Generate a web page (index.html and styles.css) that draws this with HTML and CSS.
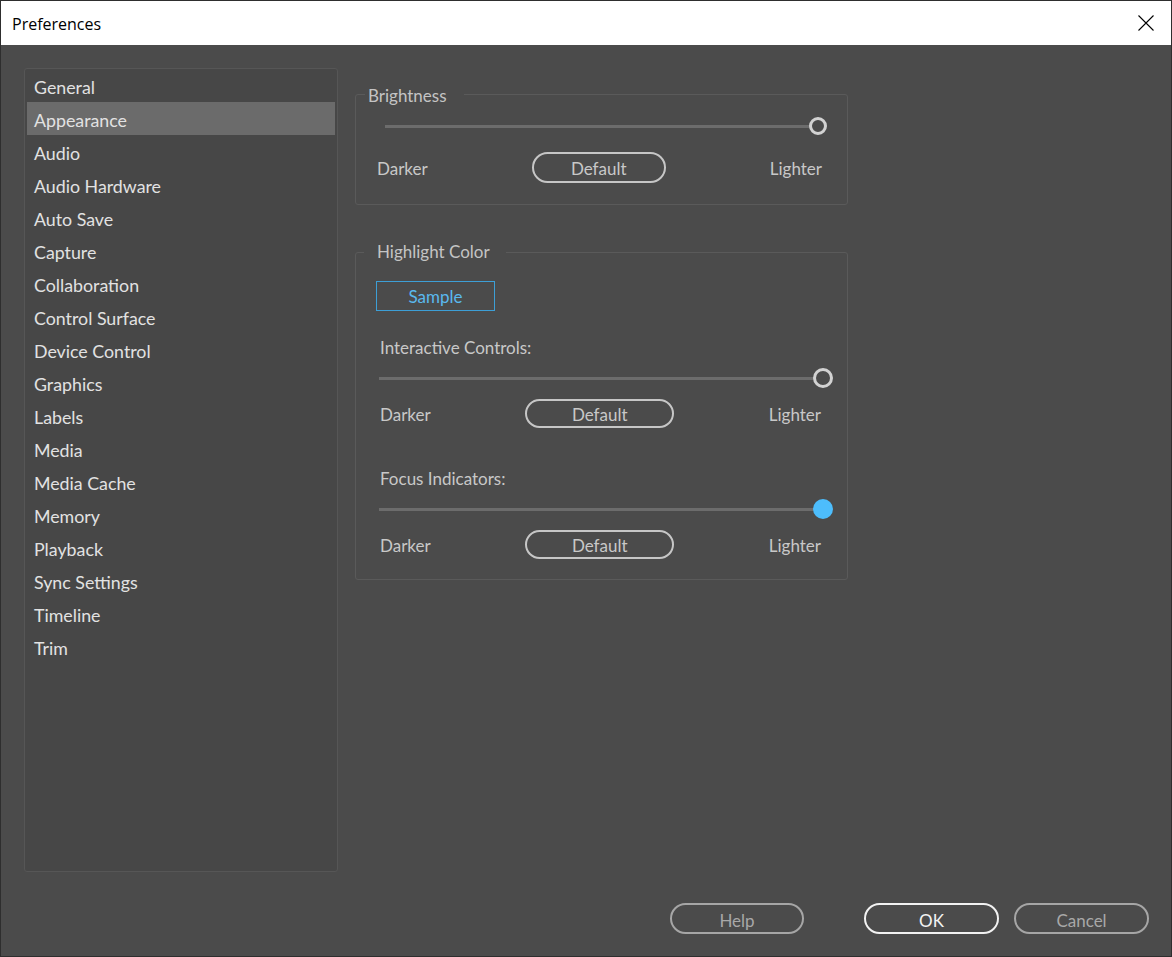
FILE: index.html
```html
<!DOCTYPE html>
<html>
<head>
<meta charset="utf-8">
<title>Preferences</title>
<link rel="stylesheet" href="styles.css">
</head>
<body>
<div class="window">
  <div class="titlebar">
    <span class="title">Preferences</span>
    <svg class="close" width="16" height="16" viewBox="0 0 16 16"><path d="M0.5 0.5 L15.5 15.5 M15.5 0.5 L0.5 15.5" stroke="#000" stroke-width="1.1" fill="none"/></svg>
  </div>
  <div class="body">
    <div class="main">
      <ul class="sidebar">
        <li>General</li>
        <li class="active">Appearance</li>
        <li>Audio</li>
        <li>Audio Hardware</li>
        <li>Auto Save</li>
        <li>Capture</li>
        <li>Collaboration</li>
        <li>Control Surface</li>
        <li>Device Control</li>
        <li>Graphics</li>
        <li>Labels</li>
        <li>Media</li>
        <li>Media Cache</li>
        <li>Memory</li>
        <li>Playback</li>
        <li>Sync Settings</li>
        <li>Timeline</li>
        <li>Trim</li>
      </ul>
      <div class="panel">
        <fieldset class="group brightness">
          <legend>Brightness</legend>
          <div class="slider"><div class="track"></div><div class="knob"></div></div>
          <div class="labels">
            <span>Darker</span>
            <button class="pill big">Default</button>
            <span>Lighter</span>
          </div>
        </fieldset>
        <fieldset class="group highlight">
          <legend>Highlight Color</legend>
          <button class="sample">Sample</button>
          <div class="label first">Interactive Controls:</div>
          <div class="slider"><div class="track"></div><div class="knob"></div></div>
          <div class="labels">
            <span>Darker</span>
            <button class="pill">Default</button>
            <span>Lighter</span>
          </div>
          <div class="label second">Focus Indicators:</div>
          <div class="slider"><div class="track"></div><div class="knob filled"></div></div>
          <div class="labels">
            <span>Darker</span>
            <button class="pill">Default</button>
            <span>Lighter</span>
          </div>
        </fieldset>
      </div>
    </div>
    <div class="footer">
      <button class="fbtn help">Help</button>
      <button class="fbtn ok">OK</button>
      <button class="fbtn cancel">Cancel</button>
    </div>
  </div>
</div>
</body>
</html>
```
FILE: styles.css
```css
* { box-sizing: border-box; }
html, body { margin: 0; padding: 0; }
body { background: #4b4b4b; font-family: Lato, "Noto Sans", sans-serif; }
.window {
  width: 1172px; height: 957px;
  border: 1px solid #2e2e2e;
  background: #4b4b4b;
  display: flex; flex-direction: column;
}
.titlebar {
  height: 44px; background: #ffffff;
  display: flex; align-items: center; justify-content: space-between;
  padding: 1px 17px 0 11px;
}
.title { font-family: "Open Sans", "Noto Sans", sans-serif; font-size: 16px; color: #000; }
.close { display: block; margin-top: -1px; }
.body { flex: 1; display: flex; flex-direction: column; }
.main { display: flex; align-items: flex-start; padding: 23px 0 0 23px; }
.sidebar {
  list-style: none; margin: 0; padding: 0 2px;
  width: 314px; height: 804px;
  background: #474747;
  border: 1px solid #565656; border-radius: 3px;
}
.sidebar li {
  height: 33px; line-height: 31px; padding: 3px 0 0 7px;
  font-size: 17.8px; color: #e2e2e2;
}
.sidebar li.active { background: #6b6b6b; }
.panel { margin-left: 17px; padding-top: 14px; width: 493px; }
.group {
  margin: 0; padding: 0; border: 1px solid #5a5a5a; border-radius: 3px;
  min-width: 0;
}
.group legend {
  font-size: 17px; line-height: 20px; color: #c4c4c4;
}
.brightness legend { margin-left: 9px; padding: 4px 17px 0 3px; }
.highlight { margin-top: 37px; padding-bottom: 20px; }
.highlight legend { margin-left: 8px; padding: 0 16px 0 13px; }
.brightness { padding-bottom: 21px; }
.slider { display: flex; align-items: center; height: 20px; }
.track { flex: 1; height: 3px; background: #6c6c6c; }
.knob {
  width: 18px; height: 18px; border-radius: 50%;
  border: 3px solid #d2d2d2; margin-left: -1px;
}
.knob.filled { width: 20px; height: 20px; background: #4dbdfc; border: none; }
.brightness .slider { margin: 10px 20px 0 29px; }
.highlight .slider { margin: 10px 14px 0 23px; }
.highlight .slider .knob { width: 20px; height: 20px; }
.labels {
  display: flex; justify-content: space-between; align-items: center;
  font-size: 17px; color: #c8c8c8;
}
.labels span { padding-top: 1px; }
.brightness .labels { margin-top: 16px; padding: 0 25px 0 21px; }
.highlight .labels { margin-top: 11px; padding: 0 26px 0 24px; }
.pill {
  font-family: Lato, "Noto Sans", sans-serif; font-size: 17px; color: #c8c8c8;
  background: transparent; border: 2px solid #c6c6c6; border-radius: 16px;
  height: 29px; width: 149px; padding: 1px 0 0;
}
.pill.big { height: 31px; width: 134px; }
.sample {
  display: block; margin: 19px 0 0 20px;
  width: 119px; height: 30px; padding: 1px 0 0;
  background: transparent; border: 1.5px solid #3d9fd6;
  font-family: Lato, "Noto Sans", sans-serif; font-size: 17px; color: #5ab9ee;
}
.label { font-size: 17px; line-height: 20px; color: #c8c8c8; padding-left: 24px; }
.label.first { margin-top: 27px; }
.label.second { margin-top: 41px; }
.footer {
  display: flex; justify-content: flex-end; margin-top: 31px; padding-right: 22px;
}
.fbtn {
  font-family: Lato, "Noto Sans", sans-serif; font-size: 17px;
  background: transparent; height: 31px; width: 135px; padding: 3px 0 0;
  border-radius: 16px; border: 2px solid #a6a6a6; color: #a8a8a8;
}
.fbtn.help { width: 134px; }
.fbtn.ok { margin-left: 60px; border-color: #f2f2f2; color: #f2f2f2; }
.fbtn.cancel { margin-left: 15px; }
```
